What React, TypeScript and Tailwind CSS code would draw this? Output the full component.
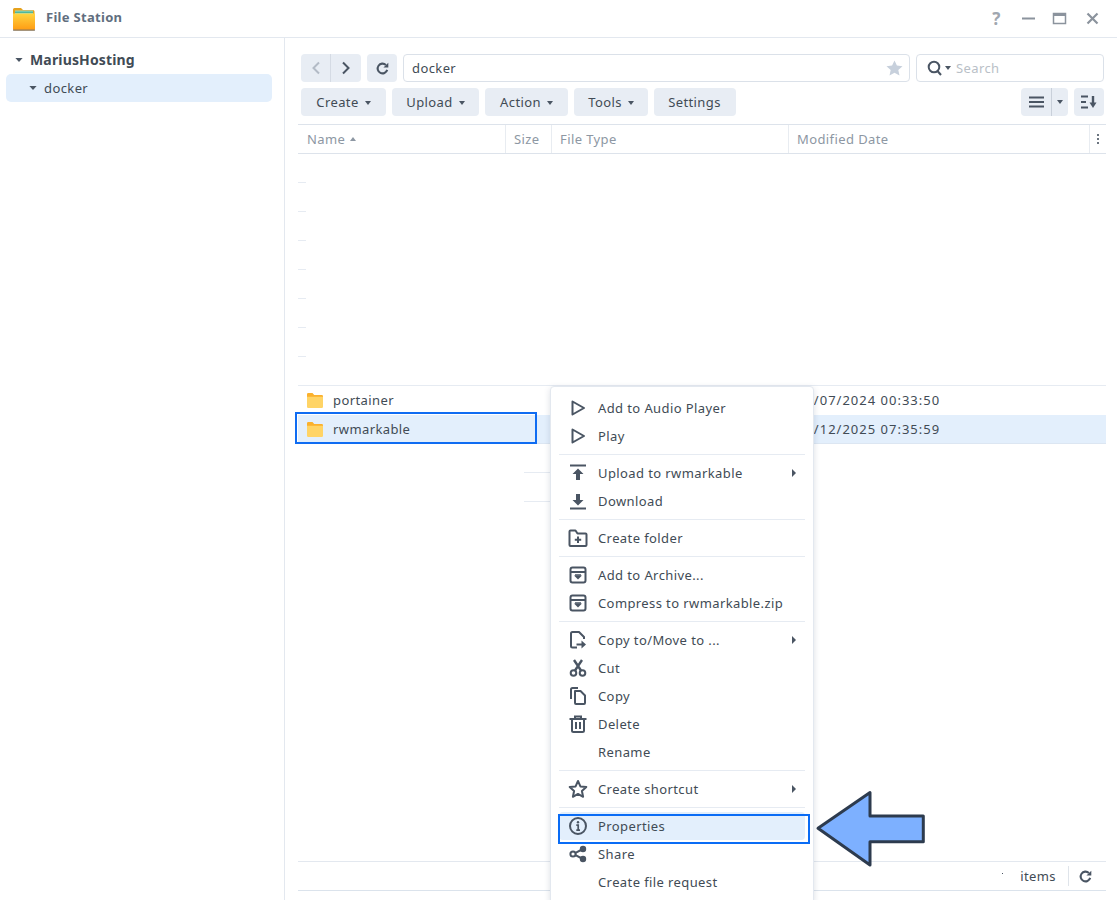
import React from "react";

const C = "#4a5563";

function Svg({ children, size = 20 }: { children: React.ReactNode; size?: number }) {
  return (
    <svg width={size} height={size} viewBox="0 0 20 20" fill="none" stroke={C} strokeWidth="2" className="shrink-0">
      {children}
    </svg>
  );
}

const icons: Record<string, React.ReactNode> = {
  play: <path d="M4.5 3.5 L16 10 L4.5 16.5 Z" strokeLinejoin="round" />,
  upload: (
    <g>
      <path d="M2 2.5H18" />
      <path d="M10 5.5 L15.5 11H12V17H8V11H4.5Z" fill={C} stroke="none" />
    </g>
  ),
  download: (
    <g>
      <path d="M2 17.5H18" />
      <path d="M10 14.5 L15.5 9H12V3H8V9H4.5Z" fill={C} stroke="none" />
    </g>
  ),
  folderplus: (
    <g>
      <path d="M1.5 4 V17 Q1.5 18 2.5 18 H17.5 Q18.5 18 18.5 17 V6.5 Q18.5 5.5 17.5 5.5 H9.5 L7.5 2.5 H2.5 Q1.5 2.5 1.5 3.5 Z" strokeLinejoin="round" />
      <path d="M10 8.5V15M6.8 11.8H13.2" />
    </g>
  ),
  archive: (
    <g>
      <rect x="2.5" y="2.5" width="15" height="15" rx="2" />
      <path d="M2.5 7H17.5" />
      <path d="M10 14.5 L14 10.5H6Z" fill={C} stroke="none" />
      <path d="M7 10H13" strokeWidth="1.5" />
    </g>
  ),
  copymove: (
    <g>
      <path d="M9 17.5 H4.5 Q3 17.5 3 16 V3.5 Q3 2 4.5 2 H11 L16 7 V9" strokeLinejoin="round" />
      <path d="M8.5 14.5H14" />
      <path d="M13.5 10.5 L18 14.5 L13.5 18.5Z" fill={C} stroke="none" />
    </g>
  ),
  cut: (
    <g>
      <circle cx="5.5" cy="15" r="2.8" />
      <circle cx="14.5" cy="15" r="2.8" />
      <path d="M7 12.5 L14 2M13 12.5 L6 2" strokeWidth="2.4" />
    </g>
  ),
  copy: (
    <g strokeLinejoin="round">
      <path d="M3 13V3.5Q3 2 4.5 2H10" />
      <path d="M7 5 H12.5 L17 9.5 V17 Q17 18 16 18 H8 Q7 18 7 17 Z" />
    </g>
  ),
  trash: (
    <g>
      <path d="M1.5 5H18.5" />
      <path d="M7 4V2.5H13V4" />
      <path d="M4 5V16.5Q4 18 5.5 18H14.5Q16 18 16 16.5V5" />
      <path d="M8 8V15M12 8V15" />
    </g>
  ),
  star: <path d="M10 2 L12.4 7.4 L18.3 8 L13.9 12 L15.1 17.8 L10 14.9 L4.9 17.8 L6.1 12 L1.7 8 L7.6 7.4 Z" strokeLinejoin="round" />,
  info: (
    <g>
      <circle cx="10" cy="10" r="8" />
      <circle cx="10" cy="6.2" r="1.2" fill={C} stroke="none" />
      <path d="M8.3 9.2H10.2V14M8.3 14.2H12" strokeWidth="1.7" />
    </g>
  ),
  share: (
    <g>
      <circle cx="5" cy="10" r="2.6" />
      <circle cx="15" cy="5" r="2.2" fill={C} />
      <circle cx="15" cy="15" r="2.2" fill={C} />
      <path d="M7.5 8.8L13 6M7.5 11.2L13 14" />
    </g>
  ),
};

function Caret({ className = "" }: { className?: string }) {
  return <span className={`inline-block w-0 h-0 border-x-[3.5px] border-x-transparent border-t-[4px] border-t-[#4a5563] ${className}`} />;
}

function ToolBtn({ label, w, caret = true }: { label: string; w: string; caret?: boolean }) {
  return (
    <div className={`${w} h-7 rounded-[4px] bg-[#e8edf4] flex items-center justify-center gap-[5px] text-[13px] text-[#414b55]`}>
      <span className="pt-[2px] pr-[1px]">{label}</span>
      {caret && <Caret className="mt-[1px]" />}
    </div>
  );
}

function Refresh({ color = "#4a5563", size = 16 }: { color?: string; size?: number }) {
  return (
    <svg width={size} height={size} viewBox="0 0 16 16" fill="none" className="shrink-0">
      <path d="M13 9.5A5.2 5.2 0 1 1 11.6 4.2" stroke={color} strokeWidth="2.2" />
      <path d="M14.2 1.8V7H9Z" fill={color} />
    </svg>
  );
}

function Folder() {
  return (
    <svg width="16" height="15" viewBox="0 0 16 15" className="shrink-0">
      <path d="M0 1.2Q0 0 1.2 0H5.5L7.2 2H14.8Q16 2 16 3.2V5H0Z" fill="#fbb12d" />
      <path d="M0 3.8H16V13.8Q16 15 14.8 15H1.2Q0 15 0 13.8Z" fill="#ffd466" />
    </svg>
  );
}

function MenuItem({ icon, label, arrow }: { icon?: string; label: string; arrow?: boolean }) {
  return (
    <div className="h-7 flex items-center pl-[17px] pr-[17px] text-[13px] text-[#414b55]">
      <span className="w-5 h-5 mr-[10px] flex items-center justify-center">{icon && <Svg>{icons[icon]}</Svg>}</span>
      <span className="flex-1 pt-[2px]">{label}</span>
      {arrow && <span className="w-0 h-0 border-y-[4px] border-y-transparent border-l-[4px] border-l-[#4a5563]" />}
    </div>
  );
}

const Sep = () => <div className="my-1 mx-2 h-px bg-[#e6ebf2]" />;

const headers = [
  { t: "Name", w: "w-[208px]", sort: true },
  { t: "Size", w: "w-[46px]" },
  { t: "File Type", w: "w-[237px]" },
  { t: "Modified Date", w: "w-[301px]" },
];

export default function App() {
  return (
    <div className="relative w-[1117px] h-[900px] overflow-hidden bg-white flex flex-col text-[13px] tracking-[0.4px] text-[#414b55] font-['Noto_Sans','Open_Sans',sans-serif]">
      {/* title bar */}
      <header className="h-[38px] shrink-0 border-b border-[#e3e8ef] flex items-center pl-3 pr-[17px]">
        <svg width="24" height="24" viewBox="0 0 24 24" className="shrink-0">
          <path d="M1 2.5Q1 1 2.5 1H9L11 3H21Q22.5 3 22.5 4.5V8H1Z" fill="#e5a11c" />
          <rect x="3" y="3.5" width="18" height="6" fill="#9fdcc4" />
          <rect x="3" y="4.6" width="18" height="1.2" fill="#3fae8f" />
          <defs>
            <linearGradient id="lg" x1="0" y1="0" x2="0" y2="1">
              <stop offset="0" stopColor="#ffd53f" />
              <stop offset="1" stopColor="#ff9a12" />
            </linearGradient>
          </defs>
          <path d="M1 6.5H23V22Q23 23.5 21.5 23.5H2.5Q1 23.5 1 22Z" fill="url(#lg)" />
          <rect x="1" y="22.6" width="22" height="1" fill="#6b6f73" />
        </svg>
        <span className="ml-[10px] pb-[2px] font-bold text-[#616e7e] tracking-[0.3px]">File Station</span>
        <div className="ml-auto flex items-center gap-[17px]">
          <span className="w-[15px] text-center text-[17px] leading-none font-bold text-[#a0a7b0]">?</span>
          <svg width="15" height="15" viewBox="0 0 15 15"><path d="M1 7.5H14" stroke="#8b939d" strokeWidth="2" /></svg>
          <svg width="15" height="15" viewBox="0 0 15 15" className="-ml-[1px]"><rect x="1.5" y="2.5" width="12" height="10" fill="none" stroke="#8b939d" strokeWidth="1.5" /><rect x="1" y="2" width="13" height="3" fill="#8b939d" /></svg>
          <svg width="15" height="15" viewBox="0 0 15 15" className="ml-[1px]"><path d="M2.5 2.5L12.5 12.5M12.5 2.5L2.5 12.5" stroke="#8b939d" strokeWidth="2.2" /></svg>
        </div>
      </header>

      <div className="flex-1 flex min-h-0">
        {/* sidebar */}
        <aside className="w-[285px] shrink-0 border-r border-[#e3e8ef] px-[6px] pt-[8px]">
          <div className="h-7 flex items-center pl-[10px] gap-[8px] font-bold text-[14px] tracking-[0.15px] text-[#414b55]">
            <Caret className="scale-x-[1.2]" />
            <span className="pb-[2px]">MariusHosting</span>
          </div>
          <div className="h-7 w-[266px] rounded-[5px] bg-[#e3effc] flex items-center pl-6 gap-[8px] text-[13px]">
            <Caret className="scale-x-[1.2]" />
            <span className="pt-[2px]">docker</span>
          </div>
        </aside>

        {/* main */}
        <main className="flex-1 min-w-0 flex flex-col pl-[13px] pr-[11px] pb-[9px]">
          <div className="pl-[3px] pr-[2px] pt-4">
            <div className="flex gap-[6px] h-7">
              <div className="w-[60px] h-7 rounded-[4px] bg-[#e8edf4] flex items-center">
                <div className="w-[30px] h-7 border-r border-[#d5dbe4] flex items-center justify-center">
                  <svg width="10" height="14" viewBox="0 0 10 14"><path d="M8 1.5L2.5 7L8 12.5" fill="none" stroke="#b3bbc6" strokeWidth="2" /></svg>
                </div>
                <div className="flex-1 flex items-center justify-center">
                  <svg width="10" height="14" viewBox="0 0 10 14"><path d="M2 1.5L7.5 7L2 12.5" fill="none" stroke="#4a5563" strokeWidth="2" /></svg>
                </div>
              </div>
              <div className="w-[30px] h-7 rounded-[4px] bg-[#e8edf4] flex items-center justify-center">
                <Refresh size={15} />
              </div>
              <div className="w-[507px] h-7 rounded-[4px] border border-[#dbe1e9] flex items-center pl-2 pr-[6px]">
                <span className="flex-1 pt-[2px]">docker</span>
                <svg width="17" height="16" viewBox="0 0 17 16"><path d="M8.5 0.5L10.9 5.6L16.5 6.2L12.3 10L13.5 15.5L8.5 12.7L3.5 15.5L4.7 10L0.5 6.2L6.1 5.6Z" fill="#c7d0dc" /></svg>
              </div>
              <div className="w-[188px] h-7 rounded-[4px] border border-[#dbe1e9] flex items-center pl-[10px]">
                <svg width="16" height="16" viewBox="0 0 16 16" className="shrink-0"><circle cx="7" cy="7" r="5.3" fill="none" stroke="#4a5563" strokeWidth="2" /><path d="M10.5 11L14 15" stroke="#4a5563" strokeWidth="2" /></svg>
                <Caret className="ml-[2px]" />
                <span className="ml-[5px] pt-[2px] text-[#b9bfc7]">Search</span>
              </div>
            </div>
            <div className="flex gap-[6px] h-7 mt-[6px]">
              <ToolBtn label="Create" w="w-[85px]" />
              <ToolBtn label="Upload" w="w-[87px]" />
              <ToolBtn label="Action" w="w-[83px]" />
              <ToolBtn label="Tools" w="w-[74px]" />
              <ToolBtn label="Settings" w="w-[82px]" caret={false} />
              <div className="ml-auto w-[47px] h-7 rounded-[4px] bg-[#e8edf4] flex items-center">
                <div className="w-[31px] h-7 border-r border-[#c9d0da] flex items-center justify-center">
                  <svg width="15" height="12" viewBox="0 0 15 12"><path d="M0 1.5H15M0 6H15M0 10.5H15" stroke="#4a5563" strokeWidth="2" /></svg>
                </div>
                <div className="flex-1 flex items-center justify-center"><Caret /></div>
              </div>
              <div className="w-[30px] h-7 rounded-[4px] bg-[#e8edf4] flex items-center justify-center">
                <svg width="16" height="14" viewBox="0 0 16 14"><path d="M0 1.5H7M0 7H5M0 12.5H7" stroke="#4a5563" strokeWidth="2" /><path d="M12 1V8" stroke="#4a5563" strokeWidth="2.4" /><path d="M8.5 7.5H15.5L12 13Z" fill="#4a5563" /></svg>
              </div>
            </div>
          </div>

          {/* table head */}
          <div className="mt-2 h-[30px] shrink-0 border-y border-[#dde3eb] flex text-[#8d97a3]">
            {headers.map((h, i) => (
              <div key={h.t} className={`${h.w} shrink-0 ${i === 0 ? "pl-[9px]" : "pl-2"} border-r border-[#e8ecf1] flex items-center gap-[5px]`}>
                <span className="pt-[2px]">{h.t}</span>
                {h.sort && <span className="w-0 h-0 border-x-[3.5px] border-x-transparent border-b-[4px] border-b-[#8d97a3]" />}
              </div>
            ))}
            <div className="flex-1 flex flex-col items-center justify-center gap-[2px]">
              <span className="w-[2px] h-[2px] bg-[#6c7580]" />
              <span className="w-[2px] h-[2px] bg-[#6c7580]" />
              <span className="w-[2px] h-[2px] bg-[#6c7580]" />
            </div>
          </div>

          {/* file list */}
          <div className="flex-1 min-h-0 overflow-hidden">
            {[0, 1, 2, 3, 4, 5, 6].map((i) => (
              <div key={i} className="h-[29px] flex items-end">
                <div className="w-2 h-px bg-[#e6ebf2]" />
              </div>
            ))}
            <div className="h-[29px] border-b border-[#e6ebf2]" />
            <div className="h-[29px] flex items-center pl-[9px]">
              <Folder />
              <span className="ml-[10px] w-[464px]">portainer</span>
              <span className="tracking-[1px]">27/07/2024 00:33:50</span>
            </div>
            <div className="h-[29px] flex items-center pl-[9px] bg-[#e3effc] shadow-[inset_0_-1px_0_#dce6f2]">
              <Folder />
              <span className="ml-[10px] w-[464px]">rwmarkable</span>
              <span className="tracking-[1px]">08/12/2025 07:35:59</span>
            </div>
            <div className="h-[29px] ml-[226px] w-[60px] border-b border-[#e6ebf2]" />
            <div className="h-[29px] ml-[226px] w-[60px] border-b border-[#e6ebf2]" />
          </div>

          {/* status bar */}
          <div className="h-[30px] shrink-0 border-y border-[#e3e8ef] border-b-[#dbe3ec] flex items-center justify-end pr-[13px]">
            <span className="w-px h-px bg-[#4a5563] mr-[17px] mb-[6px]" />
            <span className="pt-[2px]">items</span>
            <span className="w-px h-5 bg-[#dfe4ea] ml-[12px] mr-[9px]" />
            <Refresh size={15} />
          </div>
        </main>
      </div>

      {/* selected cell outline */}
      <div className="absolute left-[295px] top-[412px] w-[242px] h-[32px] border-[2.5px] border-[#0f6cf2]" />

      {/* context menu */}
      <div className="absolute left-[550px] top-[386px] w-[264px] bg-white rounded-[4px] border border-[#e3e8ef] shadow-[0_2px_6px_rgba(60,80,110,0.18)] pt-[7px] pb-2 px-0">
        <MenuItem icon="play" label="Add to Audio Player" />
        <MenuItem icon="play" label="Play" />
        <Sep />
        <MenuItem icon="upload" label="Upload to rwmarkable" arrow />
        <MenuItem icon="download" label="Download" />
        <Sep />
        <MenuItem icon="folderplus" label="Create folder" />
        <Sep />
        <MenuItem icon="archive" label="Add to Archive..." />
        <MenuItem icon="archive" label="Compress to rwmarkable.zip" />
        <Sep />
        <MenuItem icon="copymove" label="Copy to/Move to ..." arrow />
        <MenuItem icon="cut" label="Cut" />
        <MenuItem icon="copy" label="Copy" />
        <MenuItem icon="trash" label="Delete" />
        <MenuItem label="Rename" />
        <Sep />
        <MenuItem icon="star" label="Create shortcut" arrow />
        <Sep />
        <div className="mx-2 bg-[#e3effc] rounded-[4px]">
          <div className="-mx-2"><MenuItem icon="info" label="Properties" /></div>
        </div>
        <MenuItem icon="share" label="Share" />
        <MenuItem label="Create file request" />
      </div>

      {/* annotation */}
      <div className="absolute left-[558px] top-[814px] w-[252px] h-[29.5px] border-2 border-[#0a6cf5]" />
      <svg className="absolute left-[810px] top-[785px]" width="120" height="88" viewBox="0 0 120 88">
        <path d="M8 43.3 L60 7.5 V31 H113.3 V56.7 H60 V80 Z" fill="#7db0ff" stroke="#2d3b4e" strokeWidth="3" strokeLinejoin="round" />
      </svg>
    </div>
  );
}
